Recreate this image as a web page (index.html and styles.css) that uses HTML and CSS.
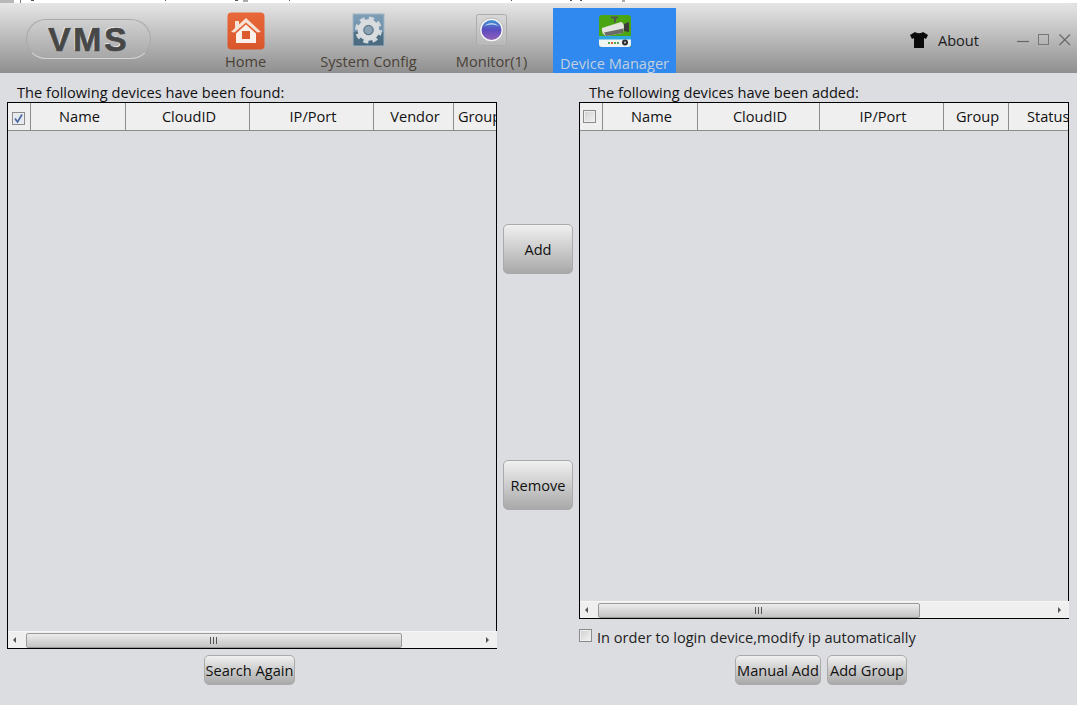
FILE: index.html
```html
<!DOCTYPE html>
<html lang="en">
<head>
<meta charset="utf-8">
<title>VMS Device Manager</title>
<link rel="stylesheet" href="styles.css">
</head>
<body>
<svg class="strip" width="1077" height="3" viewBox="0 0 1077 3" aria-hidden="true">
  <rect x="0" y="0" width="14" height="3" fill="#b9b9b9"/>
  <rect x="20" y="0" width="1" height="3" fill="#777"/>
  <path d="M31 0.5H34 M165 0.5H166 M235 0.5H238 M243 1H248 M289 0.5H290 M511 0.5H512 M570 0.5H572 M580 0.5H582 M622 1H625" stroke="#555" stroke-width="1.2"/>
</svg>
<header class="header">
  <div class="logo"><span class="logo-text">VMS</span></div>
  <nav class="nav">
    <div class="tab">
      <svg class="icon" width="38" height="38" viewBox="0 0 38 38">
        <defs><linearGradient id="h" x1="0" y1="0" x2="0" y2="1"><stop offset="0" stop-color="#e8683a"/><stop offset="1" stop-color="#d9562a"/></linearGradient></defs>
        <rect x="0.5" y="0.5" width="37" height="37" rx="4" fill="url(#h)"/>
        <path d="M19 6 L34 20 L30.5 20.5 L19 10.5 L7.5 20.5 L4 20 L8 16 L8 9 L12 9 L12 12.5Z" fill="#f7e3d6"/>
        <path d="M9 21.5 L19 12.5 L29 21.5 V31 H9Z" fill="#fbf1ea"/>
        <rect x="15" y="19" width="8" height="8" fill="#dc5a2c"/>
      </svg>
      <span>Home</span>
    </div>
    <div class="tab">
      <svg class="icon" width="38" height="38" viewBox="0 1 38 38">
        <defs><linearGradient id="g" x1="0" y1="0" x2="0" y2="1"><stop offset="0" stop-color="#7f9fb7"/><stop offset="0.55" stop-color="#6e8fa9"/><stop offset="0.56" stop-color="#527489"/><stop offset="1" stop-color="#48697f"/></linearGradient></defs>
        <rect x="3" y="3" width="31" height="32" fill="url(#g)" stroke="#a3b5c3"/>
        <circle cx="18.5" cy="19" r="11.5" fill="none" stroke="#d3d8dc" stroke-width="4" stroke-dasharray="5 4.03"/>
        <circle cx="18.5" cy="19" r="8" fill="none" stroke="#d9dde0" stroke-width="5.5"/>
        <circle cx="18.5" cy="19" r="4.5" fill="#8ba2b3" stroke="#5e7688"/>
      </svg>
      <span>System Config</span>
    </div>
    <div class="tab">
      <svg class="icon" width="38" height="38" viewBox="0 1 38 38">
        <defs><linearGradient id="m" x1="0" y1="0" x2="0" y2="1"><stop offset="0" stop-color="#3f92d4"/><stop offset="0.5" stop-color="#5c4cc0"/><stop offset="1" stop-color="#9060b8"/></linearGradient>
        <linearGradient id="mb" x1="0" y1="0" x2="0" y2="1"><stop offset="0" stop-color="#d8d8d8"/><stop offset="1" stop-color="#b8b8b8"/></linearGradient></defs>
        <rect x="3.5" y="3.5" width="30" height="31" rx="2" fill="url(#mb)" stroke="#ababab"/>
        <circle cx="18.5" cy="19" r="12" fill="#f4f4f4" stroke="#a5a5a5" stroke-width="0.7"/>
        <circle cx="18.5" cy="19" r="10" fill="url(#m)"/>
        <path d="M11 15 Q18.5 9 26 15 Q18.5 12 11 15Z" fill="#bcd6ee"/>
      </svg>
      <span>Monitor(1)</span>
    </div>
    <div class="tab tab-active">
      <svg class="icon" width="32" height="32" viewBox="0 0 32 32">
        <rect x="0" y="0" width="32" height="32" rx="3" fill="#4aa512"/>
        <path d="M0 21 H32 V29 Q32 32 29 32 H3 Q0 32 0 29Z" fill="#f1f5f2"/>
        <rect x="0" y="21" width="32" height="3.5" fill="#2fa8df"/>
        <path d="M3 13 L22 7 Q25 8 25 12 L24 18 L7 21 Q2 18 3 13Z" fill="#e4e4e0"/>
        <path d="M5 17.5 L24.5 13.5 L24 18 L7 21Z" fill="#6a6b67"/>
        <path d="M25 9 L30 7 V17 L25 16Z" fill="#3c3d3a"/>
        <rect x="12" y="1.5" width="7" height="2" fill="#55564f"/>
        <rect x="15" y="2.5" width="2" height="5" fill="#55564f"/>
        <circle cx="26" cy="27.5" r="3" fill="#2f2f2f"/>
        <circle cx="26" cy="27.5" r="1" fill="#ccc"/>
        <rect x="9" y="27" width="2" height="2" fill="#53a553"/><rect x="12" y="27" width="2" height="2" fill="#d65a3c"/><rect x="15" y="27" width="2" height="2" fill="#53a553"/><rect x="18" y="27" width="2" height="2" fill="#53a553"/>
      </svg>
      <span>Device Manager</span>
    </div>
  </nav>
  <div class="tools">
    <div class="about">
      <svg width="20" height="18" viewBox="0 0 20 18"><path d="M6 1 Q10 3.5 14 1 L19 4 L17 8 L15 7 V17 H5 V7 L3 8 L1 4Z" fill="#0a0a0a"/></svg>
      <span>About</span>
    </div>
    <div class="winctl">
      <svg width="54" height="14" viewBox="0 0 54 14">
        <path d="M0 8.5 H12" stroke="#666" stroke-width="1.2"/>
        <rect x="21.5" y="1.5" width="10" height="10" fill="none" stroke="#777"/>
        <path d="M42.5 1.5 L53 12 M53 1.5 L42.5 12" stroke="#666" stroke-width="1.1"/>
      </svg>
    </div>
  </div>
</header>
<main class="main">
  <section class="panel">
    <h2 class="panel-title">The following devices have been found:</h2>
    <div class="grid-box grid-box-found">
      <div class="grid-head">
        <div class="cell cell-check"><span class="check check-on"><svg width="11" height="11" viewBox="0 0 11 11"><path d="M2 5.5 L4.5 9 L9 1.5" fill="none" stroke="#4f6a9c" stroke-width="1.7"/></svg></span></div>
        <div class="cell w-name">Name</div>
        <div class="cell w-cloud">CloudID</div>
        <div class="cell w-ip">IP/Port</div>
        <div class="cell w-vendor">Vendor</div>
        <div class="cell cell-last">Group</div>
      </div>
      <div class="grid-body"></div>
      <div class="hscroll">
        <svg class="arrow" width="6" height="8" viewBox="0 0 6 8"><path d="M5 1 V7 L2 4Z" fill="#555"/></svg>
        <div class="track"><div class="thumb thumb-found"><span class="grip"></span></div></div>
        <svg class="arrow" width="6" height="8" viewBox="0 0 6 8"><path d="M1 1 V7 L4 4Z" fill="#555"/></svg>
      </div>
    </div>
    <div class="actions actions-found">
      <button class="btn btn-search">Search Again</button>
    </div>
  </section>
  <section class="middle">
    <button class="btn btn-big">Add</button>
    <button class="btn btn-big">Remove</button>
  </section>
  <section class="panel">
    <h2 class="panel-title panel-title-added">The following devices have been added:</h2>
    <div class="grid-box grid-box-added">
      <div class="grid-head">
        <div class="cell cell-check cell-check-added"><span class="check"></span></div>
        <div class="cell w-name">Name</div>
        <div class="cell w-cloud2">CloudID</div>
        <div class="cell w-ip">IP/Port</div>
        <div class="cell w-group">Group</div>
        <div class="cell cell-last cell-status">Status</div>
      </div>
      <div class="grid-body"></div>
      <div class="hscroll">
        <svg class="arrow" width="6" height="8" viewBox="0 0 6 8"><path d="M5 1 V7 L2 4Z" fill="#555"/></svg>
        <div class="track"><div class="thumb thumb-added"><span class="grip"></span></div></div>
        <svg class="arrow" width="6" height="8" viewBox="0 0 6 8"><path d="M1 1 V7 L4 4Z" fill="#555"/></svg>
      </div>
    </div>
    <label class="auto-ip"><span class="check check-plain"></span>In order to login device,modify ip automatically</label>
    <div class="actions actions-added">
      <button class="btn btn-manual">Manual Add</button>
      <button class="btn btn-group">Add Group</button>
    </div>
  </section>
</main>
</body>
</html>
```

FILE: styles.css
```css
* { box-sizing: border-box; }
html, body { margin: 0; height: 100%; }
body {
  width: 1077px;
  height: 705px;
  overflow: hidden;
  background: #dcdde1;
  font-family: "Open Sans", "Noto Sans", sans-serif;
  font-size: 14.6px;
  color: #111;
  display: flex;
  flex-direction: column;
}
.strip {
  display: block;
  height: 3px;
  background: #fff;
  flex: none;
}
.header {
  height: 70px;
  flex: none;
  display: flex;
  background: linear-gradient(#e6e6e6, #8f8f8f);
  border-top-right-radius: 8px;
}
.logo {
  width: 125px;
  height: 40px;
  margin: 16px 0 0 26px;
  border: 1px solid #a9a9a9;
  border-bottom-color: #d4d4d4;
  border-radius: 20px;
  background: linear-gradient(#d0d0d0, #a7a7a7);
  display: flex;
  align-items: center;
  justify-content: center;
  flex: none;
}
.logo-text {
  font-family: "Liberation Sans", sans-serif;
  font-weight: 700;
  font-size: 34px;
  letter-spacing: 2.5px;
  color: #474747;
  -webkit-text-stroke: 0.6px #474747;
  text-shadow: -1px -1px 0 #eee;
}
.nav {
  display: flex;
  margin-left: 33px;
  margin-top: 5px;
  flex: none;
}
.tab {
  width: 123px;
  height: 65px;
  display: flex;
  flex-direction: column;
  align-items: center;
  color: #4a4136;
  line-height: 19px;
}
.tab .icon { margin-top: 4px; flex: none; }
.tab span { margin-top: 2px; }
.tab-active { background: #2f89ee; color: #c3cfdc; }
.tab-active .icon { margin-top: 7px; }
.tab-active span { margin-top: 7px; }
.tools {
  display: flex;
  flex: 1;
  align-items: flex-start;
  justify-content: flex-end;
  padding-right: 6px;
}
.about {
  display: flex;
  align-items: center;
  gap: 9px;
  margin-top: 27px;
  color: #1c1c1c;
}
.winctl { margin: 30px 0 0 38px; line-height: 0; }
.main {
  flex: 1;
  display: flex;
  padding-left: 7px;
  gap: 6px;
  min-height: 0;
}
.panel { width: 490px; flex: none; display: flex; flex-direction: column; }
.panel-title {
  margin: 0;
  height: 29px;
  padding: 10px 0 0 10px;
  font-size: 14.6px;
  font-weight: 400;
  line-height: 19px;
  white-space: nowrap;
}
.grid-box {
  border: 1px solid #000;
  display: flex;
  flex-direction: column;
}
.grid-box-found { height: 547px; }
.grid-box-added { height: 517px; }
.grid-head {
  height: 28px;
  flex: none;
  display: flex;
  background: #efefef;
  border-bottom: 1px solid #8c8c8c;
}
.cell {
  flex: none;
  display: flex;
  align-items: center;
  justify-content: center;
  border-right: 1px solid #8c8c8c;
  white-space: nowrap;
  padding: 0 0 2px 3px;
}
.cell-check { width: 23px; padding: 4px 1px 0 0; }
.cell-check-added { padding: 0 4px 0 0; }
.w-name { width: 95px; }
.w-cloud { width: 124px; }
.w-cloud2 { width: 122px; }
.w-ip { width: 124px; }
.w-vendor { width: 80px; }
.w-group { width: 65px; }
.cell-last { flex: 1; min-width: 0; border-right: 0; justify-content: flex-start; padding-left: 4px; overflow: hidden; }
.cell-status { padding-left: 18px; }
.check {
  width: 13px;
  height: 13px;
  border: 1px solid #8b8b8b;
  background: linear-gradient(135deg, #cfcfcf, #f4f4f4);
  box-shadow: inset 0 0 0 1px #eee;
  display: flex;
  align-items: center;
  justify-content: center;
  flex: none;
}
.check-on { background: #e4e8f0; }
.grid-body { flex: 1; background: #dcdde1; }
.hscroll {
  height: 17px;
  flex: none;
  display: flex;
  align-items: center;
  background: #efefef;
  border-top: 1px solid #f7f7f7;
  padding: 0 6px 0 3px;
  margin-right: -1px;
}
.arrow { flex: none; }
.track { flex: 1; height: 15px; padding-left: 9px; }
.thumb {
  height: 15px;
  border: 1px solid #9a9a9a;
  border-radius: 2px;
  background: linear-gradient(#ececec, #c4c4c4);
  display: flex;
  align-items: center;
  justify-content: center;
}
.thumb-found { width: 376px; }
.thumb-added { width: 322px; }
.grip {
  width: 8px;
  height: 7px;
  background: repeating-linear-gradient(90deg, #555 0 1px, transparent 1px 3px);
}
.actions { display: flex; margin-top: 6px; }
.actions-found { justify-content: flex-start; padding-left: 197px; }
.actions-added { padding-left: 156px; gap: 6px; margin-top: 9px; }
.btn {
  height: 30px;
  padding: 0;
  border: 1px solid #aaa;
  border-radius: 5px;
  background: linear-gradient(#f0f0f0, #a9a9a9);
  font: inherit;
  color: #111;
  white-space: nowrap;
}
.btn-search { width: 91px; }
.btn-manual { width: 86px; }
.btn-group { width: 80px; }
.middle {
  width: 70px;
  flex: none;
  display: flex;
  flex-direction: column;
  gap: 186px;
  padding-top: 151px;
}
.btn-big { width: 70px; height: 50px; }
.auto-ip {
  display: flex;
  align-items: center;
  gap: 5px;
  margin-top: 8px;
  height: 19px;
  color: #222;
  white-space: nowrap;
}
.check-plain { margin-top: 2px; align-self: flex-start; }
```
